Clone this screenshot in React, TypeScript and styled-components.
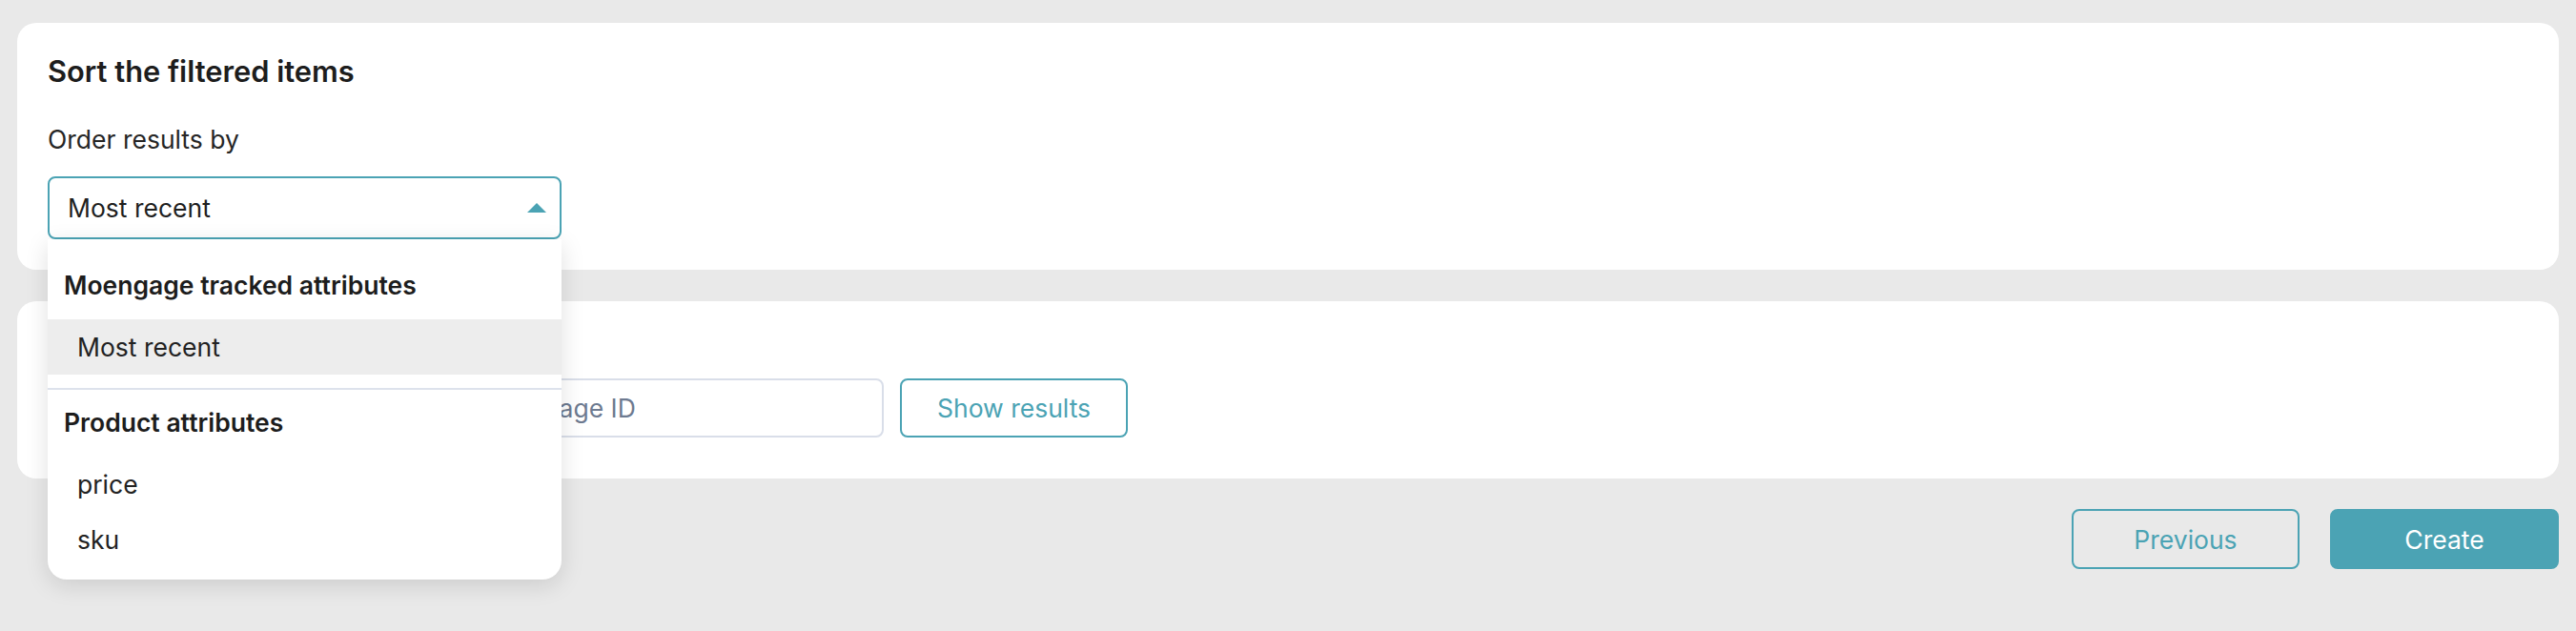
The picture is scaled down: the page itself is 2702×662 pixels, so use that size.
import React from "react";
import styled, { createGlobalStyle } from "styled-components";

const Global = createGlobalStyle`
  html, body { margin: 0; padding: 0; background: #e9e9e9; }
  body { font-family: Inter, "Noto Sans", sans-serif; color: #1f1f1f; }
  * { box-sizing: border-box; }
`;

const TEAL = "#4ba3b4";
const BODY = "26.5px";

const Page = styled.div`
  display: flex;
  flex-direction: column;
  gap: 33px;
  padding: 24px 18px 40px 18px;
  width: 2702px;
  min-height: 662px;
`;

const Card = styled.section<{ $pt: number; $pb: number }>`
  background: #ffffff;
  border-radius: 20px;
  padding: ${(p) => p.$pt}px 32px ${(p) => p.$pb}px 32px;
  display: flex;
  flex-direction: column;
`;

const Title = styled.h2`
  margin: 0;
  font-size: 30.8px;
  line-height: 34px;
  font-weight: 600;
  color: #1d1d1d;
`;

const Label = styled.div`
  margin-top: 39px;
  font-size: ${BODY};
  line-height: 30px;
  color: #262626;
`;

const SelectWrap = styled.div`
  position: relative;
  margin-top: 24px;
  width: 539px;
`;

const SelectBox = styled.div`
  height: 66px;
  border: 2px solid ${TEAL};
  border-radius: 8px;
  display: flex;
  align-items: center;
  justify-content: space-between;
  padding: 0 14px 0 19px;
  font-size: ${BODY};
  line-height: 30px;
  color: #1f1f1f;
`;

const Menu = styled.div`
  position: absolute;
  top: 100%;
  left: 0;
  width: 100%;
  background: #ffffff;
  border-radius: 0 0 20px 20px;
  box-shadow: 0 6px 24px rgba(0, 0, 0, 0.13);
  padding: 14px 0 13px 0;
  z-index: 10;
`;

const Group = styled.div<{ $divider?: boolean }>`
  ${(p) => (p.$divider ? `margin-top: 14px; border-top: 2px solid #dde2ec;` : "")}
`;

const GroupHeader = styled.div`
  height: 70px;
  line-height: 68px;
  padding-left: 17px;
  font-size: ${BODY};
  font-weight: 600;
  color: #1d1d1d;
`;

const Item = styled.div<{ $active?: boolean }>`
  height: 58px;
  line-height: 58px;
  padding-left: 31px;
  font-size: ${BODY};
  color: #222;
  background: ${(p) => (p.$active ? "#ededed" : "transparent")};
`;

const Row = styled.div`
  display: flex;
  gap: 17px;
`;

const Input = styled.input`
  width: 877px;
  height: 62px;
  border: 2px solid #d9dee9;
  border-radius: 8px;
  padding: 0 20px 0 27px;
  font-family: inherit;
  font-size: ${BODY};
  color: #1f1f1f;
  outline: none;
  &::placeholder { color: #6d7a90; }
`;

const Button = styled.button<{ $primary?: boolean }>`
  width: 239px;
  height: 62px;
  border-radius: 8px;
  border: 2px solid ${TEAL};
  background: ${(p) => (p.$primary ? TEAL : "transparent")};
  color: ${(p) => (p.$primary ? "#ffffff" : TEAL)};
  font-family: inherit;
  font-size: ${BODY};
  cursor: pointer;
`;

const Footer = styled.div`
  display: flex;
  justify-content: flex-end;
  gap: 32px;
  margin-top: -1px;
  & > button { height: 63px; }
  & > button:last-child { width: 240px; }
`;

const Caret = () => (
  <svg width="20" height="10" viewBox="0 0 20 10">
    <polygon points="0,10 10,0 20,10" fill={TEAL} />
  </svg>
);

export default function App() {
  return (
    <>
      <Global />
      <Page>
        <Card $pt={34} $pb={32}>
          <Title>Sort the filtered items</Title>
          <Label>Order results by</Label>
          <SelectWrap>
            <SelectBox>
              <span>Most recent</span>
              <Caret />
            </SelectBox>
            <Menu>
              <Group>
                <GroupHeader>Moengage tracked attributes</GroupHeader>
                <Item $active>Most recent</Item>
              </Group>
              <Group $divider>
                <GroupHeader>Product attributes</GroupHeader>
                <Item>price</Item>
                <Item>sku</Item>
              </Group>
            </Menu>
          </SelectWrap>
        </Card>
        <Card $pt={81} $pb={43}>
          <Row>
            <Input placeholder="Enter a user ID, product ID or a landing page ID" />
            <Button>Show results</Button>
          </Row>
        </Card>
        <Footer>
          <Button>Previous</Button>
          <Button $primary>Create</Button>
        </Footer>
      </Page>
    </>
  );
}
